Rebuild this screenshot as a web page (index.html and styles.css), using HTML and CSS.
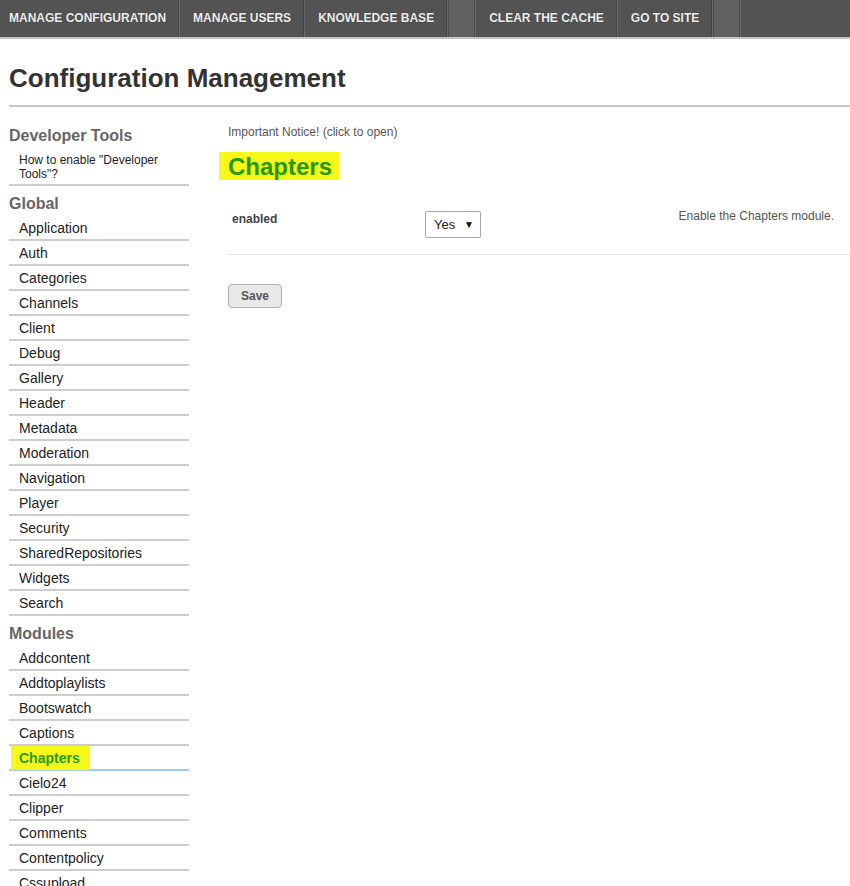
FILE: index.html
```html
<!DOCTYPE html>
<html>
<head>
<meta charset="utf-8">
<title>Configuration Management</title>
<link rel="stylesheet" href="styles.css">
</head>
<body>
<nav class="topnav">
  <a class="nav-item">MANAGE CONFIGURATION</a>
  <a class="nav-item">MANAGE USERS</a>
  <a class="nav-item">KNOWLEDGE BASE</a>
  <span class="nav-spacer"></span>
  <a class="nav-item">CLEAR THE CACHE</a>
  <a class="nav-item">GO TO SITE</a>
  <span class="nav-spacer"></span>
</nav>
<div class="page">
  <h1 class="page-title">Configuration Management</h1>
  <div class="layout">
    <aside class="sidebar">
      <h3 class="side-head first">Developer Tools</h3>
      <ul class="side-list">
        <li class="side-item small">How to enable "Developer Tools"?</li>
      </ul>
      <h3 class="side-head">Global</h3>
      <ul class="side-list">
        <li class="side-item">Application</li>
        <li class="side-item">Auth</li>
        <li class="side-item">Categories</li>
        <li class="side-item">Channels</li>
        <li class="side-item">Client</li>
        <li class="side-item">Debug</li>
        <li class="side-item">Gallery</li>
        <li class="side-item">Header</li>
        <li class="side-item">Metadata</li>
        <li class="side-item">Moderation</li>
        <li class="side-item">Navigation</li>
        <li class="side-item">Player</li>
        <li class="side-item">Security</li>
        <li class="side-item">SharedRepositories</li>
        <li class="side-item">Widgets</li>
        <li class="side-item">Search</li>
      </ul>
      <h3 class="side-head">Modules</h3>
      <ul class="side-list">
        <li class="side-item">Addcontent</li>
        <li class="side-item">Addtoplaylists</li>
        <li class="side-item">Bootswatch</li>
        <li class="side-item">Captions</li>
        <li class="side-item active"><span class="hl">Chapters</span></li>
        <li class="side-item">Cielo24</li>
        <li class="side-item">Clipper</li>
        <li class="side-item">Comments</li>
        <li class="side-item">Contentpolicy</li>
        <li class="side-item">Cssupload</li>
      </ul>
    </aside>
    <main class="content">
      <div class="notice">Important Notice! (click to open)</div>
      <h2 class="section-title">Chapters</h2>
      <div class="form-row">
        <div class="field-label">enabled</div>
        <div class="field-input">
          <div class="select-box"><span>Yes</span><span class="arrow">&#9660;</span></div>
        </div>
        <div class="field-desc">Enable the Chapters module.</div>
      </div>
      <button class="save-btn">Save</button>
    </main>
  </div>
</div>
</body>
</html>
```

FILE: styles.css
```css
* { box-sizing: border-box; }
html, body { margin: 0; padding: 0; background: #fff; }
body {
  font-family: "Liberation Sans", Arial, sans-serif;
  color: #222;
  width: 850px;
  overflow: hidden;
}
.topnav {
  display: flex;
  height: 39px;
  background: #535353;
  border-bottom: 2px solid #c4c4c4;
}
.nav-item {
  display: flex;
  align-items: center;
  padding: 0 13px 1px 13px;
  font-size: 12px;
  font-weight: bold;
  color: #eee;
  text-shadow: 0 0 1px #333;
  border-right: 1px solid #6a6a6a;
  box-shadow: inset -1px 0 0 #444;
}
.nav-item:first-child { padding-left: 9px; }
.nav-spacer {
  width: 28px;
  background: #616161;
  border-right: 1px solid #6a6a6a;
  box-shadow: inset -1px 0 0 #4a4a4a, inset 1px 0 0 #4a4a4a;
}
.page { padding-left: 9px; }
.page-title {
  margin: 0;
  padding: 24px 0 0 0;
  height: 68px;
  font-size: 26px;
  font-weight: bold;
  color: #333;
  border-bottom: 2px solid #c8c8c8;
  line-height: 30px;
}
.layout { display: flex; gap: 39px; }
.sidebar { width: 180px; flex: none; }
.side-head {
  margin: 8px 0 2px;
  font-size: 16px;
  line-height: 20px;
  font-weight: bold;
  color: #666;
}
.side-head.first { margin-top: 19px; margin-bottom: 4px; }
.side-list { list-style: none; margin: 0; padding: 0; }
.side-item {
  height: 25px;
  padding: 4px 0 0 10px;
  font-size: 14px;
  line-height: 17px;
  color: #222;
  border-bottom: 2px solid #cdcdcd;
}
.side-item.small {
  height: 36px;
  font-size: 12px;
  line-height: 14px;
  padding-top: 3px;
}
.side-item.active {
  font-weight: bold;
  color: #2a9a10;
  border-bottom-color: #9ecbee;
  padding-left: 2px;
  padding-top: 0;
}
.hl {
  display: inline-block;
  vertical-align: top;
  background: #f7f71a;
  padding: 4px 10px 3px 8px;
  line-height: 17px;
}
.content { flex: 1; padding-top: 18px; }
.notice {
  font-size: 12px;
  line-height: 14px;
  color: #555;
}
.section-title {
  display: inline-block;
  margin: 13px 0 0 -9px;
  padding: 1px 7px 0 9px;
  height: 28px;
  font-size: 24px;
  line-height: 28px;
  font-weight: bold;
  color: #229a00;
  background: #f7f71a;
}
.form-row {
  display: flex;
  align-items: flex-start;
  margin-top: 29px;
  padding: 0 16px 16px 4px;
  border-bottom: 1px solid #e3e3e3;
}
.field-label {
  width: 193px;
  font-size: 12px;
  font-weight: bold;
  color: #444;
  line-height: 14px;
  padding-top: 3px;
}
.field-input { flex: 1; }
.select-box {
  display: inline-flex;
  align-items: center;
  justify-content: space-between;
  width: 56px;
  height: 27px;
  margin-top: 2px;
  padding: 0 6px 0 8px;
  border: 1px solid #a8a8a8;
  border-radius: 2px;
  font-size: 13px;
  color: #222;
  background: #fff;
}
.arrow { font-size: 10px; color: #111; }
.field-desc {
  font-size: 12px;
  color: #555;
  line-height: 14px;
}
.save-btn {
  display: block;
  margin-top: 29px;
  width: 54px;
  height: 24px;
  padding: 0;
  font-family: "Liberation Sans", Arial, sans-serif;
  font-size: 12px;
  font-weight: bold;
  color: #555;
  background: #e8e8e8;
  border: 1px solid #b0b0b0;
  border-radius: 4px;
}
```
